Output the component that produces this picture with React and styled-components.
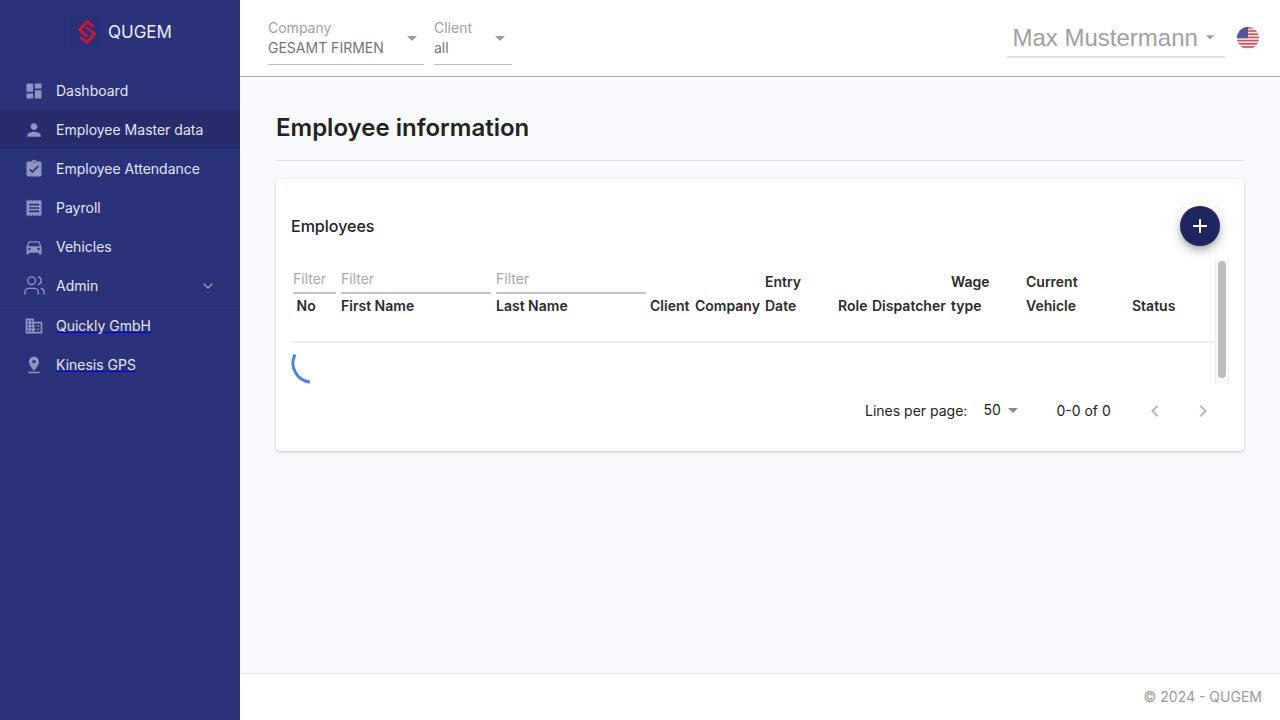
import React from "react";
import styled, { createGlobalStyle } from "styled-components";
import {
  MdDashboard,
  MdPerson,
  MdAssignmentTurnedIn,
  MdReceipt,
  MdDirectionsCar,
  MdBusiness,
  MdPinDrop,
  MdArrowDropDown,
  MdAdd,
  MdChevronLeft,
  MdChevronRight,
} from "react-icons/md";
import { Users, ChevronDown } from "lucide-react";

const Global = createGlobalStyle`
  html, body { margin: 0; padding: 0; height: 100%; }
  body { font-family: "Inter", "Liberation Sans", sans-serif; background: #f8f9fd; }
  * { box-sizing: border-box; }
`;

const Layout = styled.div`
  display: flex;
  width: 1280px;
  height: 720px;
  overflow: hidden;
`;

// Sidebar

const Sidebar = styled.aside`
  width: 240px;
  flex-shrink: 0;
  background: #2a327a;
  color: #e3e5f2;
`;
const Brand = styled.div`
  height: 71px;
  display: flex;
  align-items: center;
  padding: 0 0 7px 71px;
  gap: 6px;
  font-size: 17px;
  color: #eceef8;
`;
const LogoBox = styled.div`
  width: 31px;
  height: 32px;
  background: #29307a;
  display: flex;
  align-items: center;
  justify-content: center;
`;
const Nav = styled.nav`
  display: flex;
  flex-direction: column;
`;
const NavItem = styled.div`
  height: ${(p) => (p.$divider ? 40 : 39)}px;
  display: flex;
  align-items: center;
  padding: 0 24px;
  font-size: 14px;
  background: ${(p) => (p.$active ? "#262c6c" : "transparent")};
  border-bottom: ${(p) => (p.$divider ? "1px solid #262c6f" : "none")};
`;
const NavIcon = styled.span`
  width: 20px;
  margin-right: 12px;
  display: flex;
  justify-content: center;
  color: #8f94c2;
  svg {
    flex-shrink: 0;
  }
`;
const NavLabel = styled.span`
  flex: 1;
  text-decoration: ${(p) => (p.$link ? "underline" : "none")};
  text-decoration-color: #0000ee;
`;
const NavArrow = styled.span`
  display: flex;
  color: #8f94c2;
`;

// Header

const Column = styled.div`
  flex: 1;
  display: flex;
  flex-direction: column;
  min-width: 0;
`;
const Header = styled.header`
  height: 77px;
  background: #fff;
  border-bottom: 1px solid #a9a9ab;
  box-shadow: 0 1px 1px rgba(0, 0, 0, 0.08);
  display: flex;
  align-items: flex-start;
  padding: 0 21px 0 28px;
`;
const Select = styled.div`
  position: relative;
  width: ${(p) => p.$width}px;
  margin-right: 10px;
  height: 65px;
  padding-top: 19px;
  border-bottom: 1px solid #bdbdbd;
`;
const SelectLabel = styled.div`
  font-size: 14px;
  line-height: 17px;
  color: #a0a0a0;
`;
const SelectValue = styled.div`
  font-size: 14px;
  line-height: 17px;
  margin-top: 3px;
  color: #757575;
`;
const SelectCaret = styled.span`
  position: absolute;
  right: 0;
  top: 26px;
  display: flex;
  color: #9e9e9e;
`;
const Spacer = styled.div`
  flex: 1;
`;
const UserMenu = styled.div`
  width: 218px;
  height: 58px;
  border-bottom: 2px solid #e0e0e0;
  padding: 24px 0 0 5.5px;
  display: flex;
  align-items: flex-start;
  font-family: "Liberation Sans", Arial, sans-serif;
  font-size: 24px;
  line-height: 28px;
  color: #a0a0a0;
`;
const UserCaret = styled.span`
  display: flex;
  margin: 3px 0 0 2px;
  color: #9e9e9e;
`;
const FlagBox = styled.div`
  margin: 27px 0 0 12px;
  width: 22px;
  height: 22px;
`;

// Content

const Main = styled.main`
  flex: 1;
  padding: 36px 36px 0;
  background: #f8f9fd;
`;
const Title = styled.h1`
  margin: 0;
  height: 48px;
  font-size: 24px;
  line-height: 30px;
  font-weight: 600;
  color: #222;
  border-bottom: 1px solid #d9dbe6;
`;
const Card = styled.section`
  margin-top: 18px;
  height: 272px;
  background: #fff;
  border-radius: 4px;
  box-shadow: 0 1px 3px rgba(0, 0, 0, 0.22);
  padding: 27px 15px 0;
`;
const CardHead = styled.div`
  height: 53px;
  display: flex;
  align-items: center;
  justify-content: space-between;
  padding: 0 9px 13px 0;
`;
const CardTitle = styled.h2`
  margin: 0;
  font-size: 16px;
  font-weight: 500;
  color: #222;
`;
const Fab = styled.button`
  width: 40px;
  height: 40px;
  border: 0;
  padding: 0;
  border-radius: 50%;
  background: #1f265f;
  color: #fff;
  display: flex;
  align-items: center;
  justify-content: center;
  box-shadow: 0 3px 5px -1px rgba(0, 0, 0, 0.2), 0 6px 10px 0 rgba(0, 0, 0, 0.14),
    0 1px 18px 0 rgba(0, 0, 0, 0.12);
`;
const TableWrap = styled.div`
  display: flex;
  width: 938px;
  height: 125px;
`;
const TableArea = styled.div`
  width: 924px;
`;
const Table = styled.table`
  width: 924px;
  height: 84px;
  table-layout: fixed;
  border-collapse: collapse;
  border-bottom: 2px solid #eeeeee;
`;
const Th = styled.th`
  width: ${(p) => p.$width}px;
  padding: 0 0 0 ${(p) => p.$pad || 0}px;
  vertical-align: top;
  text-align: left;
  font-size: 14px;
  line-height: 24px;
  font-weight: 600;
  color: #2b2b2b;
`;
const HeadText = styled.div`
  height: 59px;
  display: flex;
  flex-direction: column;
  justify-content: flex-end;
`;
const Filter = styled.div`
  width: ${(p) => p.$width}px;
  height: 35px;
  margin-left: ${(p) => p.$shift || 0}px;
  padding-top: 11px;
  border-bottom: 2px solid #c4c4c4;
  font-size: 14px;
  line-height: 17px;
  font-weight: 400;
  color: #a8a8a8;
  white-space: nowrap;
`;
const Scrollbar = styled.div`
  width: 14px;
  height: 125px;
  background: #fafafa;
  border-left: 1px solid #ececec;
  border-right: 1px solid #ececec;
  padding: 2px 2px 0;
`;
const ScrollThumb = styled.div`
  width: 8px;
  height: 117px;
  border-radius: 4px;
  background: #bdbdbd;
`;
const Spinner = styled.svg`
  display: block;
  margin: 9px 0 0 -1px;
`;
const Pagination = styled.div`
  display: flex;
  align-items: center;
  height: 52px;
  padding-top: 1px;
  font-size: 14px;
  color: #222;
  white-space: nowrap;
  & > * {
    flex-shrink: 0;
  }
`;
const PageLabel = styled.span`
  margin-left: 574px;
`;
const PageSize = styled.span`
  display: flex;
  align-items: center;
  margin-left: 16px;
  width: 73px;
  padding-bottom: 2px;
`;
const PageRange = styled.span`
  width: 87px;
`;
const PageBtn = styled.span`
  display: flex;
  color: #b9b9b9;
  & + & {
    margin-left: 24px;
  }
`;

const Footer = styled.footer`
  height: 47px;
  background: #fff;
  border-top: 1px solid #e6e7ec;
  display: flex;
  align-items: center;
  justify-content: flex-end;
  padding: 0 18px 2px 0;
  font-size: 14px;
  color: #9a9a9a;
`;

const menu = [
  { label: "Dashboard", icon: <MdDashboard size={20} /> },
  { label: "Employee Master data", icon: <MdPerson size={20} />, active: true },
  { label: "Employee Attendance", icon: <MdAssignmentTurnedIn size={20} /> },
  { label: "Payroll", icon: <MdReceipt size={20} /> },
  { label: "Vehicles", icon: <MdDirectionsCar size={20} /> },
  { label: "Admin", icon: <Users size={23} strokeWidth={1.4} />, more: true },
  { label: "Quickly GmbH", icon: <MdBusiness size={20} />, link: true },
  { label: "Kinesis GPS", icon: <MdPinDrop size={20} />, link: true },
];

const columns = [
  { width: 50, pad: 5.5, lines: ["No"], filter: 43, shift: -3.5 },
  { width: 155, lines: ["First Name"], filter: 150 },
  { width: 154, lines: ["Last Name"], filter: 150 },
  { width: 45, lines: ["Client"] },
  { width: 70, lines: ["Company"] },
  { width: 73, lines: ["Entry", "Date"] },
  { width: 34, lines: ["Role"] },
  { width: 79, lines: ["Dispatcher"] },
  { width: 75, lines: ["Wage", "type"] },
  { width: 106, lines: ["Current", "Vehicle"] },
  { width: 83, lines: ["Status"] },
];

function Logo() {
  return (
    <svg width="18" height="24" viewBox="0 0 18 24" fill="none" stroke="#d4152f" strokeWidth="2.8">
      <path d="M15.5 6.5 L9 1.5 L1.5 10 L9.5 16.5" />
      <path d="M2.5 17.5 L9 22.5 L16.5 13.5 L8.5 7.5" />
    </svg>
  );
}

function Flag() {
  const stripes = [0, 1, 2, 3, 4, 5, 6];
  return (
    <svg width="22" height="22" viewBox="0 0 22 22">
      <defs>
        <clipPath id="flag-round">
          <circle cx="11" cy="11" r="11" />
        </clipPath>
      </defs>
      <g clipPath="url(#flag-round)">
        <rect width="22" height="22" fill="#f3e9ea" />
        {stripes.map((i) => (
          <rect key={i} y={i * 3.2} width="22" height="1.6" fill="#c9505f" />
        ))}
        <rect width="11" height="11.2" fill="#4f5796" />
      </g>
    </svg>
  );
}

function App() {
  return (
    <Layout>
      <Global />
      <Sidebar>
        <Brand>
          <LogoBox>
            <Logo />
          </LogoBox>
          QUGEM
        </Brand>
        <Nav>
          {menu.map((m) => (
            <NavItem key={m.label} $active={m.active} $divider={m.more}>
              <NavIcon>{m.icon}</NavIcon>
              <NavLabel $link={m.link}>{m.label}</NavLabel>
              {m.more && (
                <NavArrow>
                  <ChevronDown size={16} />
                </NavArrow>
              )}
            </NavItem>
          ))}
        </Nav>
      </Sidebar>
      <Column>
        <Header>
          <Select $width={156}>
            <SelectLabel>Company</SelectLabel>
            <SelectValue>GESAMT FIRMEN</SelectValue>
            <SelectCaret>
              <MdArrowDropDown size={24} />
            </SelectCaret>
          </Select>
          <Select $width={78}>
            <SelectLabel>Client</SelectLabel>
            <SelectValue>all</SelectValue>
            <SelectCaret>
              <MdArrowDropDown size={24} />
            </SelectCaret>
          </Select>
          <Spacer />
          <UserMenu>
            Max Mustermann
            <UserCaret>
              <MdArrowDropDown size={20} />
            </UserCaret>
          </UserMenu>
          <FlagBox>
            <Flag />
          </FlagBox>
        </Header>
        <Main>
          <Title>Employee information</Title>
          <Card>
            <CardHead>
              <CardTitle>Employees</CardTitle>
              <Fab>
                <MdAdd size={24} />
              </Fab>
            </CardHead>
            <TableWrap>
              <TableArea>
                <Table>
                  <thead>
                    <tr>
                      {columns.map((c) => (
                        <Th key={c.lines.join()} $width={c.width} $pad={c.pad}>
                          {c.filter ? (
                            <>
                              <Filter $width={c.filter} $shift={c.shift}>
                                Filter
                              </Filter>
                              <div>{c.lines[0]}</div>
                            </>
                          ) : (
                            <HeadText>
                              {c.lines.map((l) => (
                                <div key={l}>{l}</div>
                              ))}
                            </HeadText>
                          )}
                        </Th>
                      ))}
                    </tr>
                  </thead>
                </Table>
                <Spinner width="24" height="32" viewBox="0 0 24 32" fill="none">
                  <path d="M5 2.5 A 19 19 0 0 0 20 30" stroke="#4a86e0" strokeWidth="3" />
                </Spinner>
              </TableArea>
              <Scrollbar>
                <ScrollThumb />
              </Scrollbar>
            </TableWrap>
            <Pagination>
              <PageLabel>Lines per page:</PageLabel>
              <PageSize>
                50
                <MdArrowDropDown size={24} color="#8a8a8a" />
              </PageSize>
              <PageRange>0-0 of 0</PageRange>
              <PageBtn>
                <MdChevronLeft size={24} />
              </PageBtn>
              <PageBtn>
                <MdChevronRight size={24} />
              </PageBtn>
            </Pagination>
          </Card>
        </Main>
        <Footer>© 2024 - QUGEM</Footer>
      </Column>
    </Layout>
  );
}

export default App;
